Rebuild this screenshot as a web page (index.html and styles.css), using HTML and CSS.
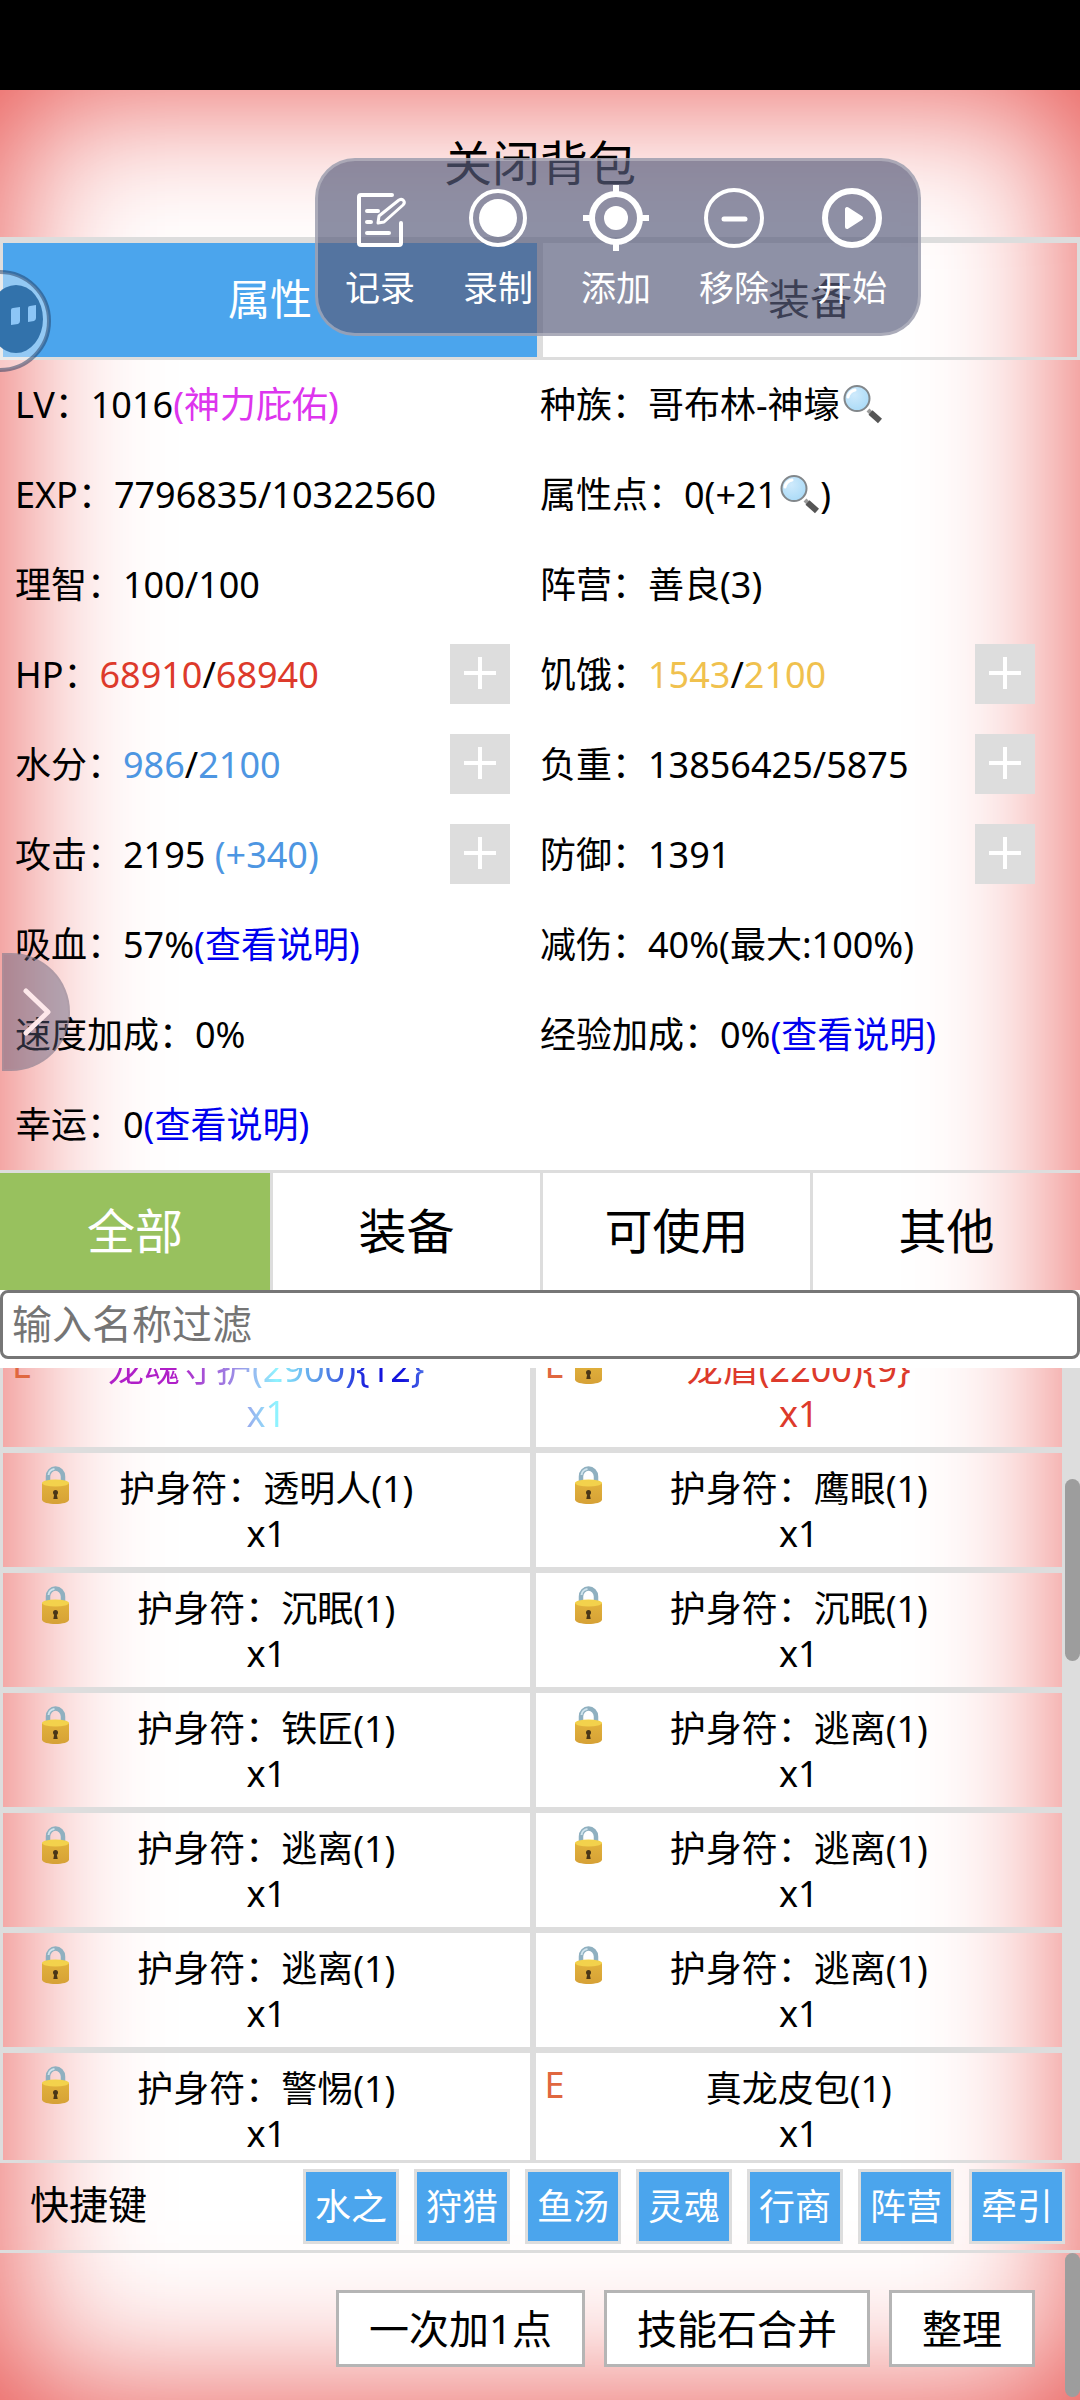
FILE: index.html
```html
<!DOCTYPE html>
<html lang="zh-CN">

<head>
    <meta charset="UTF-8">
    <meta name="viewport" content="width=device-width, initial-scale=1.0">
    <title>背包</title>
    <link rel="stylesheet" href="styles.css">
</head>

<body>
    <svg class="defs" width="0" height="0">
        <defs>
            <linearGradient id="gold" x1="0" y1="0" x2="0" y2="1">
                <stop offset="0" stop-color="#e2b23c" />
                <stop offset="1" stop-color="#d6a136" />
            </linearGradient>
            <radialGradient id="glass" cx="0.4" cy="0.35" r="0.7">
                <stop offset="0" stop-color="#cfeafc" />
                <stop offset="1" stop-color="#a9daf7" />
            </radialGradient>
        </defs>
        <symbol id="lock" viewBox="0 0 27 38">
            <path d="M6 20V10.500a7.500 8 0 0 1 15 0V20" fill="none" stroke="#8fb0c0" stroke-width="4.500" />
            <path d="M6.500 9a7 6.500 0 0 1 6-6" fill="none" stroke="#cfe3ec" stroke-width="2" />
            <path d="M0 17v16.500c0 6 27 6 27 0V17z" fill="url(#gold)" />
            <ellipse cx="13.500" cy="17" rx="13.500" ry="3.500" fill="#f3d24c" />
            <circle cx="13.500" cy="26.500" r="2.500" fill="#4b3717" />
            <path d="M12.500 27h2l1.200 6h-4.400z" fill="#4b3717" />
        </symbol>
        <symbol id="search" viewBox="0 0 40 40">
            <path d="M25 26l4 4" stroke="#9a9a9a" stroke-width="4" />
            <path d="M27.500 28.500l9.500 8.500" stroke="#555" stroke-width="6" />
            <circle cx="14" cy="14.500" r="12.500" fill="url(#glass)" stroke="#82878b" stroke-width="2" />
            <path d="M5 13a9 9 0 0 1 7-7" fill="none" stroke="#fff" stroke-width="3" stroke-linecap="round" />
        </symbol>
    </svg>

    <div class="status_bar"></div>

    <div class="bag">
        <header class="bag_head">
            <button class="close_btn">关闭背包</button>
        </header>

        <nav class="tabs">
            <button class="tab active">属性</button>
            <button class="tab">装备</button>
        </nav>

        <section class="stats">
            <div class="stat">LV：1016<span class="purple">(神力庇佑)</span></div>
            <div class="stat">种族：哥布林-神壕<svg class="search"><use href="#search" /></svg></div>
            <div class="stat">EXP：7796835/10322560</div>
            <div class="stat">属性点：0(+21<svg class="search"><use href="#search" /></svg>)</div>
            <div class="stat">理智：100/100</div>
            <div class="stat">阵营：善良(3)</div>
            <div class="stat">HP：<span class="red">68910</span>/<span class="red">68940</span><button class="plus" aria-label="HP"></button></div>
            <div class="stat">饥饿：<span class="yellow">1543</span>/<span class="yellow">2100</span><button class="plus" aria-label="饥饿"></button></div>
            <div class="stat">水分：<span class="blue">986</span>/<span class="blue">2100</span><button class="plus" aria-label="水分"></button></div>
            <div class="stat">负重：13856425/5875<button class="plus" aria-label="负重"></button></div>
            <div class="stat">攻击：2195&nbsp;<span class="blue">(+340)</span><button class="plus" aria-label="攻击"></button></div>
            <div class="stat">防御：1391<button class="plus" aria-label="防御"></button></div>
            <div class="stat">吸血：57%<a href="#">(查看说明)</a></div>
            <div class="stat">减伤：40%(最大:100%)</div>
            <div class="stat">速度加成：0%</div>
            <div class="stat">经验加成：0%<a href="#">(查看说明)</a></div>
            <div class="stat">幸运：0<a href="#">(查看说明)</a></div>
        </section>

        <nav class="filters">
            <button class="filter active">全部</button>
            <button class="filter">装备</button>
            <button class="filter">可使用</button>
            <button class="filter">其他</button>
        </nav>

        <div class="name_filter">
            <input type="text" name="itemName" placeholder="输入名称过滤" aria-label="输入名称过滤">
        </div>

        <div class="list">
            <div class="items" id="items">
                <div class="item">
                    <div class="marks"><span class="equip">E</span></div>
                    <div class="rainbow">龙魂守护(2900){12}<br>x1</div>
                </div>
                <div class="item">
                    <div class="marks"><span class="equip">E</span><svg class="lock"><use href="#lock" /></svg></div>
                    <div class="red">龙盾(2200){9}<br>x1</div>
                </div>
                <div class="item">
                    <div class="marks"><span class="equip"></span><svg class="lock"><use href="#lock" /></svg></div>
                    <div>护身符：透明人(1)<br>x1</div>
                </div>
                <div class="item">
                    <div class="marks"><span class="equip"></span><svg class="lock"><use href="#lock" /></svg></div>
                    <div>护身符：鹰眼(1)<br>x1</div>
                </div>
                <div class="item">
                    <div class="marks"><span class="equip"></span><svg class="lock"><use href="#lock" /></svg></div>
                    <div>护身符：沉眠(1)<br>x1</div>
                </div>
                <div class="item">
                    <div class="marks"><span class="equip"></span><svg class="lock"><use href="#lock" /></svg></div>
                    <div>护身符：沉眠(1)<br>x1</div>
                </div>
                <div class="item">
                    <div class="marks"><span class="equip"></span><svg class="lock"><use href="#lock" /></svg></div>
                    <div>护身符：铁匠(1)<br>x1</div>
                </div>
                <div class="item">
                    <div class="marks"><span class="equip"></span><svg class="lock"><use href="#lock" /></svg></div>
                    <div>护身符：逃离(1)<br>x1</div>
                </div>
                <div class="item">
                    <div class="marks"><span class="equip"></span><svg class="lock"><use href="#lock" /></svg></div>
                    <div>护身符：逃离(1)<br>x1</div>
                </div>
                <div class="item">
                    <div class="marks"><span class="equip"></span><svg class="lock"><use href="#lock" /></svg></div>
                    <div>护身符：逃离(1)<br>x1</div>
                </div>
                <div class="item">
                    <div class="marks"><span class="equip"></span><svg class="lock"><use href="#lock" /></svg></div>
                    <div>护身符：逃离(1)<br>x1</div>
                </div>
                <div class="item">
                    <div class="marks"><span class="equip"></span><svg class="lock"><use href="#lock" /></svg></div>
                    <div>护身符：逃离(1)<br>x1</div>
                </div>
                <div class="item">
                    <div class="marks"><span class="equip"></span><svg class="lock"><use href="#lock" /></svg></div>
                    <div>护身符：警惕(1)<br>x1</div>
                </div>
                <div class="item">
                    <div class="marks"><span class="equip">E</span></div>
                    <div>真龙皮包(1)<br>x1</div>
                </div>
            </div>
            <div class="track"><div class="thumb"></div></div>
        </div>

        <div class="quick">
            <span class="quick_title">快捷键</span>
            <div class="quick_btns">
                <button>水之</button>
                <button>狩猎</button>
                <button>鱼汤</button>
                <button>灵魂</button>
                <button>行商</button>
                <button>阵营</button>
                <button>牵引</button>
            </div>
        </div>

        <footer class="foot">
            <div class="foot_btns">
                <button>一次加1点</button>
                <button>技能石合并</button>
                <button>整理</button>
            </div>
            <div class="track"><div class="thumb"></div></div>
        </footer>
    </div>

    <!-- floating tools -->
    <div class="tools">
        <button class="tool">
            <svg width="66" height="66" viewBox="0 0 66 66" fill="none" stroke="#fff" stroke-width="4" stroke-linecap="round" stroke-linejoin="round">
                <path d="M45 10H14a2 2 0 0 0-2 2v46a2 2 0 0 0 2 2h38a2 2 0 0 0 2-2V38" />
                <path d="M20 26h11M20 37h4M20 48h22" />
                <path d="M31 38l1-7 20-16c4-2 7 2 4 5L37 37z" stroke-width="3" />
            </svg>
            <span>记录</span>
        </button>
        <button class="tool">
            <svg width="66" height="66" viewBox="0 0 66 66">
                <circle cx="33" cy="33" r="27" fill="none" stroke="#fff" stroke-width="4" />
                <circle cx="33" cy="33" r="19" fill="#fff" />
            </svg>
            <span>录制</span>
        </button>
        <button class="tool">
            <svg width="66" height="66" viewBox="0 0 66 66" fill="none" stroke="#fff" stroke-width="6">
                <circle cx="33" cy="33" r="24" />
                <circle cx="33" cy="33" r="12" fill="#fff" stroke="none" />
                <path d="M33 0v9M33 57v9M0 33h9M57 33h9" />
            </svg>
            <span>添加</span>
        </button>
        <button class="tool">
            <svg width="66" height="66" viewBox="0 0 66 66" fill="none" stroke="#fff" stroke-width="4">
                <circle cx="33" cy="33" r="28" />
                <path d="M23 34h21" stroke-width="5" stroke-linecap="round" />
            </svg>
            <span>移除</span>
        </button>
        <button class="tool">
            <svg width="66" height="66" viewBox="0 0 66 66">
                <circle cx="33" cy="33" r="27" fill="none" stroke="#fff" stroke-width="6" />
                <path d="M28 24v18l14-9z" fill="#fff" stroke="#fff" stroke-width="4" stroke-linejoin="round" />
            </svg>
            <span>开始</span>
        </button>
    </div>

    <svg class="robot" width="52" height="104" viewBox="0 0 52 104">
        <circle cx="0" cy="52" r="49" fill="#fff" fill-opacity="0.4" stroke="#1f3a60" stroke-opacity="0.5" stroke-width="4" />
        <ellipse cx="16" cy="50" rx="27" ry="34" fill="#3272ab" />
        <path d="M11 41q0-2 2-2l7-1v14q0 2-2 3l-7 1zM28 39q0-2 2-2l6-1v13q0 2-2 3l-6 1z" fill="#8cc5f6" />
    </svg>

    <button class="drawer" aria-label="展开">
        <svg width="30" height="50" viewBox="0 0 30 50">
            <path d="M4 4l22 21L4 46" fill="none" stroke="#fde8ea" stroke-width="5" stroke-linecap="round" stroke-linejoin="round" />
        </svg>
    </button>

    <script>
        "use strict";
        // the list opens a little way down
        document.getElementById("items").scrollTop = 38;
    </script>
</body>

</html>
```
FILE: styles.css
```css
* {box-sizing: border-box;}

body
{
    margin: 0;
    height: 100vh;
    position: relative;
    display: flex;
    flex-direction: column;
    overflow: hidden;
    background: #fff;
    color: #000;
    font: 36px/45px "Noto Sans", "Noto Sans CJK SC", sans-serif;
}

button
{
    margin: 0;
    padding: 0;
    border: 0;
    border-radius: 0;
    background: transparent;
    color: inherit;
    font: inherit;
}

a{color: #0000ee; text-decoration: none;}

.defs{position: absolute;}

.red{color: #dd3a2b;}
.blue{color: #4d96e2;}
.yellow{color: #f0c14e;}
.purple{color: #dd35ee;}

.status_bar{flex: none; height: 90px; background: #000;}

.bag
{
    flex: 1;
    min-height: 0;
    display: flex;
    flex-direction: column;
    box-shadow: inset 0 0 150px #e74a46;
}

.bag_head{flex: none; height: 150px; display: flex; justify-content: center; border-bottom: 3px solid #ddd;}
.close_btn{padding-bottom: 3px; font-size: 48px;}

.tabs{flex: none; display: flex;}
.tab{flex: 1; height: 120px; padding-bottom: 3px; border: 3px solid #ddd; font-size: 42px;}
.tab.active{background: #4ba5ed; color: #fff;}


.stats{flex: none; display: grid; grid-template-columns: 1fr 1fr; padding: 0 15px;}
.stat{height: 90px; padding-bottom: 2px; display: flex; align-items: center; white-space: nowrap;}
.search{width: 40px; height: 40px; margin-left: 3px;}

.plus{position: relative; width: 60px; height: 60px; margin: 0 30px 0 auto; background: #ddd;}
.plus::before, .plus::after{content: ""; position: absolute; background: #fff;}
.plus::before{left: 14px; top: 27px; width: 32px; height: 4px;}
.plus::after{left: 28px; top: 13px; width: 4px; height: 32px;}


.filters{flex: none; display: grid; grid-template-columns: repeat(4, 1fr); border-top: 3px solid #ddd;}
.filter{height: 117px; padding-bottom: 3px; font-size: 48px; border-left: 3px solid #ddd;}
.filter:first-child{border-left: 0;}
.filter.active{background: #98c15e; color: #fff;}

.name_filter{flex: none; height: 78px; background: #fff;}
.name_filter input
{
    display: block;
    width: 100%;
    height: 69px;
    padding: 0 9px 3px;
    border: 3px solid #767676;
    border-radius: 8px;
    background: #fff;
    font: inherit;
    font-size: 40px;
}
.name_filter input::placeholder{color: #757575;}


.list{flex: 1; min-height: 0; display: flex;}
.items
{
    flex: 1;
    display: grid;
    grid-template-columns: 1fr 1fr;
    align-content: start;
    overflow-y: auto;
    scrollbar-width: none;
}
.item{position: relative; height: 120px; padding: 13px 0 11px; border: 3px solid #ddd; text-align: center;}
.marks{position: absolute; left: 9px; top: 9px; display: flex; align-items: center;}
.equip{width: 30px; height: 45px; color: #e0673f; text-align: left;}
.lock{width: 27px; height: 38px;}

.rainbow
{
    background: linear-gradient(90deg, #b01fc8 33%, #9c8ce6 44%, #8ff4ff 52%, #5a96e8 60%, #1414dc 70%, #1414dc 76%, #6aa2ee 82%);
    -webkit-background-clip: text;
    background-clip: text;
    color: transparent;
}

.track{width: 15px; background: #ddd;}
.thumb{background: #9d9d9d; border-radius: 8px;}
.list .thumb{height: 182px; margin-top: 111px;}


.quick
{
    flex: none;
    height: 93px;
    padding: 0 15px 0 30px;
    display: flex;
    align-items: center;
    justify-content: space-between;
    border-top: 3px solid #ddd;
    border-bottom: 3px solid #ddd;
}
.quick_title{padding-bottom: 6px; font-size: 39px;}
.quick_btns{display: flex; gap: 15px;}
.quick_btns button{width: 96px; height: 75px; border: 3px solid #ddd; background: #4ba5ed; color: #fff;}

.foot{flex: none; height: 147px; display: flex;}
.foot_btns{flex: 1; display: flex; align-items: center; justify-content: flex-end; gap: 19px; padding: 4px 30px 0 0;}
.foot_btns button{height: 77px; padding: 0 30px; border: 3px solid #b5b5b5; background: #fff; font-size: 40px;}
.foot .track{background: transparent;}
.foot .thumb{height: 144px;}


.tools
{
    position: absolute;
    left: 315px;
    top: 158px;
    display: flex;
    padding: 24px 7px 23px 3px;
    border: 3px solid rgba(190, 190, 200, 0.6);
    border-radius: 40px;
    background: rgba(89, 93, 124, 0.68);
    color: #fff;
}
.tool{width: 118px; display: flex; flex-direction: column; align-items: center; gap: 14px; font-size: 35px;}

.robot{position: absolute; left: 0; top: 269px;}

.drawer
{
    position: absolute;
    left: 2px;
    top: 953px;
    width: 68px;
    height: 118px;
    padding-left: 18px;
    display: flex;
    align-items: center;
    border: 2px solid rgba(170, 150, 160, 0.4);
    border-radius: 0 59px 59px 0;
    background: rgba(90, 90, 120, 0.45);
}
```
